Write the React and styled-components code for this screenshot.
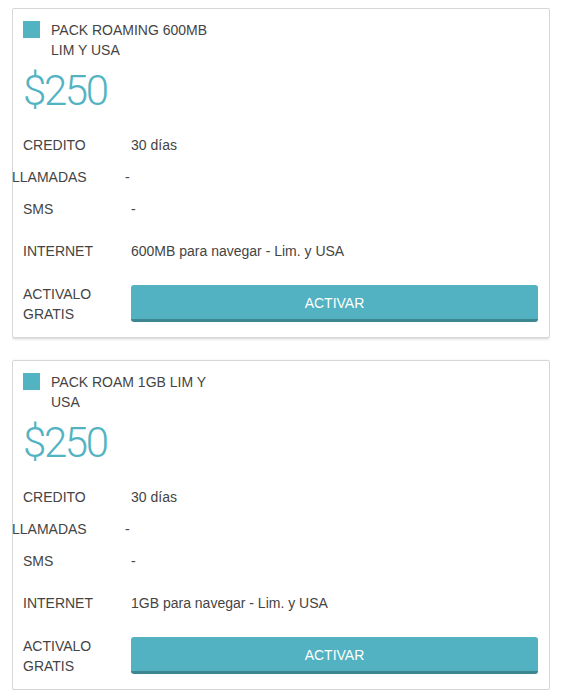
import React from 'react'
import styled, { createGlobalStyle } from 'styled-components'

const GlobalStyle = createGlobalStyle`
  body {
    margin: 8px 14px 0 12px;
    background: #ffffff;
    font-family: 'Liberation Sans', Arial, sans-serif;
  }
`

const packs = [
  { title: 'PACK ROAMING 600MB LIM Y USA', price: '$250', internet: '600MB para navegar - Lim. y USA' },
  { title: 'PACK ROAM 1GB LIM Y USA', price: '$250', internet: '1GB para navegar - Lim. y USA' },
]

const List = styled.div`
  display: flex;
  flex-direction: column;
  gap: 22px;
`

const SCard = styled.div`
  border: 1px solid #d6d6d6;
  border-radius: 2px;
  box-shadow: 0 1px 3px rgba(0, 0, 0, 0.18);
  padding: 11px 11px 15px 10px;
  color: #444444;
  font-size: 14px;
`

const Header = styled.div`
  display: flex;
  align-items: flex-start;
  gap: 11px;
`

const Square = styled.span`
  width: 17px;
  height: 17px;
  margin-top: 1px;
  background: #52b3c2;
  flex-shrink: 0;
`

const Title = styled.div`
  width: 178px;
  line-height: 20px;
`

const Price = styled.div`
  font-family: Roboto, sans-serif;
  font-weight: 300;
  font-size: 42px;
  line-height: 48px;
  letter-spacing: -2.4px;
  color: #52b3c2;
  margin: 7px 0 14px;
`

const Row = styled.div`
  display: flex;
  align-items: center;
  height: ${(p) => p.$height || 32}px;
  margin-top: ${(p) => p.$top || 0}px;
  margin-left: ${(p) => p.$shift || 0}px;
`

const Label = styled.div`
  width: ${(p) => 108 - (p.$shift || 0)}px;
  flex-shrink: 0;
  line-height: 20px;
`

const Value = styled.div`
  flex: 1;
`

const Button = styled.button`
  flex: 1;
  height: 37px;
  border: none;
  border-bottom: 3px solid #3c8690;
  border-radius: 3px;
  background: #52b2c1;
  color: #ffffff;
  font-family: 'Liberation Sans', Arial, sans-serif;
  font-size: 14px;
  padding: 2px 0 0;
  cursor: pointer;
`

const Card = ({ pack }) => (
  <SCard>
    <Header>
      <Square />
      <Title>{pack.title}</Title>
    </Header>
    <Price>{pack.price}</Price>
    <Row>
      <Label>CREDITO</Label>
      <Value>30 días</Value>
    </Row>
    <Row $shift={-11}>
      <Label $shift={-5}>LLAMADAS</Label>
      <Value>-</Value>
    </Row>
    <Row>
      <Label>SMS</Label>
      <Value>-</Value>
    </Row>
    <Row $top={10}>
      <Label>INTERNET</Label>
      <Value>{pack.internet}</Value>
    </Row>
    <Row $top={18} $height={37}>
      <Label>
        ACTIVALO
        <br />
        GRATIS
      </Label>
      <Button>ACTIVAR</Button>
    </Row>
  </SCard>
)

export default function App() {
  return (
    <>
      <GlobalStyle />
      <List>
        {packs.map((pack, i) => (
          <Card key={i} pack={pack} />
        ))}
      </List>
    </>
  )
}
